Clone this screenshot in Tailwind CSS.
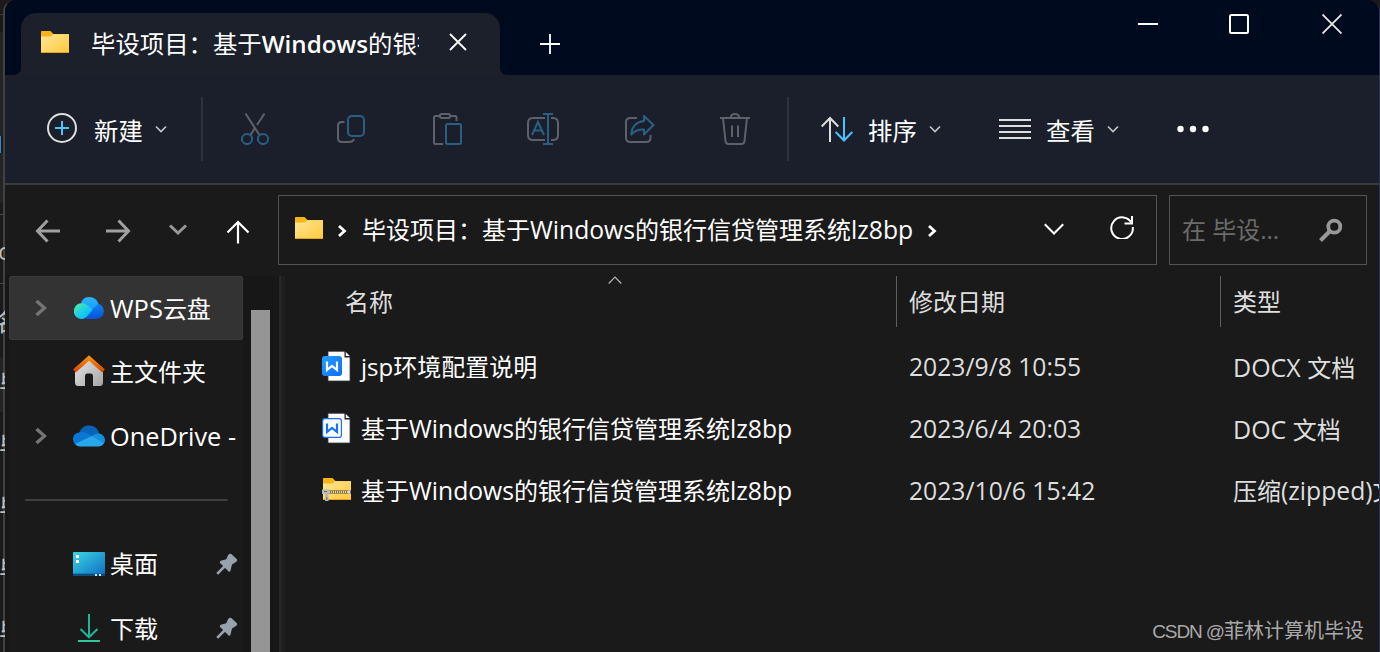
<!DOCTYPE html>
<html lang="zh-CN">
<head>
  <meta charset="UTF-8" />
  <meta name="viewport" content="width=device-width, initial-scale=1.0"/>
  <title>毕设项目</title>
  <script src="https://cdn.jsdelivr.net/npm/@tailwindcss/browser@4"></script>
</head>
<body class="flex h-[652px] w-[1380px] overflow-hidden bg-[#1a1a1a] font-['Open_Sans','Noto_Sans_CJK_SC',sans-serif] text-[24px] leading-8 whitespace-nowrap text-white">

  <!-- Shared shapes -->
  <svg width="0" height="0" class="absolute">
    <defs>
      <linearGradient id="gFolder" x1="0" y1="0" x2="1" y2="1"><stop offset="0" stop-color="#ffe69a"/><stop offset="1" stop-color="#ffc938"/></linearGradient>
      <linearGradient id="gDesk" x1="0" y1="0" x2="1" y2="1"><stop offset="0" stop-color="#3bd5e8"/><stop offset="1" stop-color="#0f6cbd"/></linearGradient>
      <linearGradient id="gRoof" x1="0" y1="0" x2="0" y2="1"><stop offset="0" stop-color="#f78b0c"/><stop offset="1" stop-color="#d94a05"/></linearGradient>
      <linearGradient id="gHouse" x1="0" y1="0" x2="1" y2="1"><stop offset="0" stop-color="#e8e8e8"/><stop offset="1" stop-color="#a5a5a5"/></linearGradient>
      <linearGradient id="gCloudA" x1="0" y1="0" x2="1" y2="1"><stop offset="0" stop-color="#57efa0"/><stop offset=".6" stop-color="#14c8f5"/><stop offset="1" stop-color="#12aaff"/></linearGradient>
      <linearGradient id="gCloudB" x1="0" y1="0" x2="0" y2="1"><stop offset="0" stop-color="#2cb5fb"/><stop offset="1" stop-color="#1599f8"/></linearGradient>
      <linearGradient id="gCloudC" x1="0" y1="0" x2="0" y2="1"><stop offset="0" stop-color="#0a84f5"/><stop offset="1" stop-color="#0b52d8"/></linearGradient>
      <linearGradient id="gDoc" x1="0" y1="0" x2="1" y2="1"><stop offset="0" stop-color="#27a0ff"/><stop offset="1" stop-color="#0c6cfb"/></linearGradient>
      <symbol id="folder" viewBox="0 0 28 22">
        <path d="M0 0.8Q0 0 .8 0H9.5L12.5 3H28V8H0Z" fill="#fbb416"/>
        <path d="M0 5.5H9.5L12 3.2H28V22H0Z" fill="url(#gFolder)"/>
        <path d="M0 21.5H28" stroke="#e9a31b"/>
      </symbol>
      <symbol id="chev" viewBox="0 0 12 8"><path d="M1 1.5L6 6.5L11 1.5" fill="none" stroke="#c4c5c9" stroke-width="1.6"/></symbol>
      <symbol id="expand" viewBox="0 0 12 18"><path d="M1.5 2L9.5 9L1.5 16" fill="none" stroke="#747474" stroke-width="3.4"/></symbol>
      <symbol id="crumb" viewBox="0 0 10 14"><path d="M2 2L7.5 7L2 12" fill="none" stroke="#fff" stroke-width="2.8"/></symbol>
      <symbol id="pin" viewBox="0 0 22 22">
        <path d="M12.2 2Q13.6 0 15.3 1L20.9 6.2Q21.8 7.6 20.3 8.8L16 11.6L14.4 18Q13.6 19.4 12.4 18.2L4 10Q3.2 8.5 4.8 7.8L10.2 6.2Z" fill="#99a2aa"/>
        <path d="M8.5 13.5L1.2 20.8" stroke="#99a2aa" stroke-width="2.6"/>
      </symbol>
    </defs>
  </svg>

  <!-- Edge of the window behind -->
  <div class="relative z-10 -mr-[2px] flex h-[652px] w-[5px] shrink-0 flex-col overflow-hidden text-[#bdbdbd]">
    <div class="h-[15px] w-[3px] shrink-0 border-b border-[#3a3a3a]"></div>
    <div class="h-[17px] shrink-0"></div>
    <div class="h-[104px] w-[3px] shrink-0 bg-[#242424]"></div>
    <div class="h-[17px] w-[1px] shrink-0 bg-[#2f8cc4]"></div>
    <div class="h-[50px] w-[3px] shrink-0 bg-[#242424]"></div>
    <div class="h-[12px] w-[3px] shrink-0 border-b border-[#4a4a4a]"></div>
    <div class="h-[69px] w-[5px] shrink-0 border-b border-[#4a4a4a] pt-[20px]"><span class="-ml-[2px]">c</span></div>
    <div class="h-[74px] shrink-0 pt-[22px]"><span class="-ml-[5px]">名</span></div>
    <div class="h-[54px] w-[3px] shrink-0 bg-[#242424] pt-[10px]"><span class="-ml-[1px]">毕</span></div>
    <div class="h-[62px] shrink-0 pt-[18px]"><span class="-ml-[1px]">毕</span></div>
    <div class="h-[62px] shrink-0 pt-[18px]"><span class="-ml-[1px]">毕</span></div>
    <div class="h-[62px] shrink-0 pt-[18px]"><span class="-ml-[1px]">毕</span></div>
    <div class="h-[62px] shrink-0 pt-[18px]"><span class="-ml-[1px]">毕</span></div>
  </div>

  <!-- Explorer window -->
  <div class="flex h-[652px] w-[1377px] shrink-0 flex-col overflow-hidden rounded-t-[12px] border-r border-l-2 border-r-[#2d3350] border-l-[#414141] bg-[#1a1a1a]">

    <!-- Title bar -->
    <div class="flex h-[75px] shrink-0 bg-[#000a1e]">
      <div class="flex w-4 items-end bg-[#1b202b]"><div class="h-[75px] w-4 rounded-br-[7px] bg-[#000a1e]"></div></div>
      <div class="mt-[13px] flex h-[62px] w-[479px] items-center rounded-t-[15px] bg-[#1b202b] pl-5">
        <svg width="28" height="22" class="mb-1"><use href="#folder"/></svg>
        <div class="ml-[22px] w-[328px] overflow-hidden text-[24.4px]">毕设项目：基于<span class="text-[24.2px] font-semibold">Windows</span>的银行信贷</div>
        <svg width="18" height="18" class="mb-[4px] ml-[30px]" fill="none" stroke="#fff" stroke-width="1.8"><path d="M1 1L17 17M17 1L1 17"/></svg>
      </div>
      <div class="flex flex-1 bg-[#1b202b]">
        <div class="flex flex-1 rounded-bl-[7px] bg-[#000a1e]">
          <svg width="20" height="20" class="mt-[34px] ml-10" fill="none" stroke="#fff" stroke-width="1.8"><path d="M10 0V20M0 10H20"/></svg>
          <div class="mt-[14px] ml-auto flex h-5 gap-[71px] pr-[37px]">
            <svg width="20" height="20"><path d="M0 10H20" stroke="#fff" stroke-width="2"/></svg>
            <svg width="20" height="20"><rect x="1" y="1" width="18" height="18" rx="1.5" fill="none" stroke="#fff" stroke-width="2"/></svg>
            <svg width="20" height="20" class="ml-[2px]" stroke="#e8e8e8" stroke-width="1.8"><path d="M.5 .5L19.5 19.5M19.5 .5L.5 19.5"/></svg>
          </div>
        </div>
      </div>
    </div>

    <!-- Command bar -->
    <div class="flex h-[110px] shrink-0 items-center border-b-2 border-[#3a3a3a] bg-[#1b1f2b] pl-[41px]">
      <svg width="32" height="32" fill="none" class="mb-[2px]"><circle cx="16" cy="16" r="14" stroke="#dedede" stroke-width="2"/><path d="M16 9V23M9 16H23" stroke="#4cc2ff" stroke-width="2"/></svg>
      <span class="mt-[3px] ml-4 w-12 text-[24.4px]">新建</span>
      <svg width="12" height="8" class="ml-[13px]"><use href="#chev"/></svg>
      <div class="ml-[34px] h-16 w-[2px] bg-[#2f323e]"></div>

      <div class="ml-9 flex gap-16">
        <svg width="32" height="32" fill="none" stroke-width="2">
          <path d="M6.5 .5L20.5 22M25.5 .5L18 12M15.5 15.5L11.5 22" stroke="#5f616a"/>
          <circle cx="8" cy="26" r="5.1" stroke="#2b5f82"/><circle cx="24" cy="26" r="5.1" stroke="#2b5f82"/>
        </svg>
        <svg width="32" height="32" fill="none" stroke-width="2">
          <path d="M9.5 9H7Q3 9 3 13V25Q3 29 7 29H14Q18 29 19 26" stroke="#5f616a"/>
          <rect x="13" y="3" width="16" height="20" rx="4" stroke="#2b5f82"/>
        </svg>
        <svg width="32" height="32" fill="none" stroke-width="2">
          <path d="M8.5 3H4.5Q3 3 3 4.5V29.5Q3 31 4.5 31H12M19 3H24Q25.5 3 25.5 4.5V8" stroke="#5f616a"/>
          <rect x="8.8" y="1" width="10.4" height="4" rx="2" stroke="#5f616a"/>
          <rect x="15" y="11" width="15" height="20" rx="1.5" stroke="#2b5f82"/>
        </svg>
        <svg width="32" height="32" fill="none" stroke-width="2">
          <path d="M18 5H6Q1 5 1 10V22Q1 27 6 27H18M24 5H26Q31 5 31 10V22Q31 27 26 27H24" stroke="#5f616a"/>
          <path d="M21 1V31M16 1H26M16 31H26M5 22L11 9L17 22M7.3 17.5H14.8" stroke="#2b5f82"/>
        </svg>
        <svg width="32" height="32" fill="none" stroke-width="2" stroke-linejoin="round">
          <path d="M14 5H7.5Q3 5 3 9V25Q3 29 7.5 29H23Q27.5 29 27.5 25V22" stroke="#5f616a"/>
          <path d="M21 3L30.5 12L21 21.5V16.5Q13 16 8.3 21.5Q9 9.5 21 8Z" stroke="#2b5f82"/>
        </svg>
        <svg width="32" height="32" fill="none" stroke="#5f616a" stroke-width="2">
          <path d="M1 5H31M4 5L6.5 28Q6.8 31 9.5 31H22.5Q25.2 31 25.5 28L28 5M11.5 5Q12 1 16 1Q20 1 20.5 5M13 12.5V24M19 12.5V24"/>
        </svg>
      </div>

      <div class="ml-9 h-16 w-[2px] bg-[#2f323e]"></div>
      <svg width="32" height="32" class="ml-8" fill="none" stroke-width="2"><path d="M9 29V5M.7 13.5L9 5L17.3 13.5" stroke="#dedede"/><path d="M23 4V27.5M14.7 19L23 27.5L31.3 19" stroke="#4cc2ff"/></svg>
      <span class="mt-[3px] mr-px ml-[15px] w-12 text-[24.4px]">排序</span>
      <svg width="12" height="8" class="ml-3"><use href="#chev"/></svg>
      <svg width="32" height="32" class="ml-[58px]"><path d="M0 7H32M0 13H32M0 19H32M0 25H32" stroke="#dedede" stroke-width="2"/></svg>
      <span class="mt-[3px] mr-px ml-[15px] w-12 text-[24.4px]">查看</span>
      <svg width="12" height="8" class="ml-3"><use href="#chev"/></svg>
      <svg width="32" height="32" class="ml-[58px]" fill="#fff"><circle cx="3.5" cy="16" r="3.2"/><circle cx="16" cy="16" r="3.2"/><circle cx="28.5" cy="16" r="3.2"/></svg>
    </div>

    <!-- Navigation row -->
    <div class="flex h-[91px] shrink-0 pt-[10px]">
      <div class="flex h-[72px] w-[273px] items-center pl-[30px]">
        <svg width="26" height="24" fill="none" stroke="#a0a0a0" stroke-width="3"><path d="M25 12H2.5M12.5 1.5L2.5 12L12.5 22.5"/></svg>
        <svg width="26" height="24" class="ml-[44px]" fill="none" stroke="#a0a0a0" stroke-width="3"><path d="M1 12H23.5M13.5 1.5L23.5 12L13.5 22.5"/></svg>
        <svg width="18" height="12" class="mb-[2px] ml-[38px]" fill="none" stroke="#989898" stroke-width="3"><path d="M1 1.5L9 9L17 1.5"/></svg>
        <svg width="24" height="24" class="mt-[2px] ml-[39px]" fill="none" stroke="#fff" stroke-width="2.2"><path d="M12 23.5V2M1.5 12.5L12 2L22.5 12.5"/></svg>
      </div>
      <div class="flex h-[70px] w-[879px] items-center border border-[#535353] pl-4">
        <svg width="28" height="22" class="mb-1"><use href="#folder"/></svg>
        <svg width="10" height="14" class="mt-[2px] ml-[14px]"><use href="#crumb"/></svg>
        <span class="ml-[15px] w-[551px]">毕设项目：基于<span class="text-[24.7px]">Windows</span>的银行信贷管理系统<span class="text-[24.7px]">lz8bp</span></span>
        <svg width="10" height="14" class="mt-[2px] ml-[14px]"><use href="#crumb"/></svg>
        <svg width="20" height="12" class="mb-[2px] ml-[107px]" fill="none" stroke="#fff" stroke-width="2"><path d="M.8 1.2L10 10.5L19.2 1.2"/></svg>
        <svg width="24" height="24" class="mb-[6px] ml-[46px]" fill="none" stroke="#fff" stroke-width="2"><path d="M21.8 8.5A10.8 10.8 0 1 0 22.8 12M22 1V8.5H14.5"/></svg>
      </div>
      <div class="ml-3 flex h-[70px] w-[198px] items-center border border-[#535353] pl-3 text-[#6b6b6b]">
        <span class="w-[97px]">在 毕设...</span>
        <svg width="24" height="24" class="ml-[40px]" fill="none" stroke="#989898"><circle cx="15.3" cy="8.7" r="6" stroke-width="3.8"/><path d="M11 13L1.5 22.5" stroke-width="4"/></svg>
      </div>
    </div>

    <div class="flex min-h-0 flex-1">
      <!-- Sidebar -->
      <div class="flex w-[238px] shrink-0 flex-col overflow-hidden border-l-4 border-[#171717]">
        <div class="flex h-16 shrink-0 items-center rounded-[2px] border border-[#3a3a3a] bg-[#333] pl-[25px]">
          <svg width="12" height="18"><use href="#expand"/></svg>
          <svg width="30" height="22" class="ml-[27px]">
            <path d="M12 22L16 14L24 6.5A7.9 7.9 0 0 1 22.5 22Z" fill="url(#gCloudC)"/>
            <path d="M6.5 9C7 3 10.5 0 15 0C20 0 23.5 3 24.3 6.8L17 14L12 12Z" fill="url(#gCloudB)"/>
            <path d="M8 22A7.9 7.9 0 1 1 12.5 7.8Q16 9.5 18.5 13L12.5 20Q10.5 22 8 22Z" fill="url(#gCloudA)"/>
          </svg>
          <span class="ml-[6px]"><span class="text-[25.5px]">WPS</span>云盘</span>
        </div>
        <div class="flex h-16 shrink-0 items-center pl-16">
          <svg width="32" height="32" class="mb-[2px]">
            <path d="M2 13L16 2L30 13V27Q30 31 27 31H20V21Q20 18.5 18 18.5H14Q12 18.5 12 21V31H5Q2 31 2 27Z" fill="url(#gHouse)"/>
            <path d="M1.5 16L16 3L30.5 16" fill="none" stroke="url(#gRoof)" stroke-width="4"/>
          </svg>
          <span class="ml-[5px]">主文件夹</span>
        </div>
        <div class="flex h-16 shrink-0 items-center pl-[26px]">
          <svg width="12" height="18"><use href="#expand"/></svg>
          <svg width="32" height="22" class="ml-[26px]">
            <path d="M6 8C8 3 11 .5 16 .5C21 .5 25 3.5 26 8L19 14Z" fill="#0763b8"/>
            <path d="M6.5 7.5C10 6 14 7.5 19 11L12 18L2 19.5C-2 14 0 8 6.5 7.5Z" fill="#0a78d3"/>
            <path d="M19 11Q26 5.5 30.5 11Q33.5 15 30.5 19L20 15Z" fill="#1490df"/>
            <path d="M2 19L19 11L30.8 18.5Q29 21.5 25 21.5H7Q4 21.5 2 19Z" fill="#28a8ea"/>
          </svg>
          <span class="ml-[5px] text-[25.3px]">OneDrive -</span>
        </div>
        <div class="mt-[31px] mb-[31px] ml-4 h-[2px] w-[203px] shrink-0 rounded-full bg-[#3f3f3f]"></div>
        <div class="flex h-16 shrink-0 items-center pl-16">
          <svg width="32" height="24">
            <rect width="32" height="24" rx="1" fill="url(#gDesk)"/><path d="M0 22.8H32" stroke="#0b4a75" stroke-width="2.2"/>
            <path d="M3 3H6V6H3ZM3 8H6V11H3Z" fill="#fff"/><path d="M22 22H24V24H22ZM26 22H28V24H26Z" fill="#cfe6f3"/>
          </svg>
          <span class="ml-[5px] w-12">桌面</span>
          <svg width="22" height="22" class="ml-[58px]"><use href="#pin"/></svg>
        </div>
        <div class="flex h-16 shrink-0 items-center pl-16">
          <svg width="32" height="30" fill="none" stroke-width="2">
            <path d="M16 1V24M7.5 16L16 24.3L24.5 16" stroke="#1fb597"/><path d="M5 28H27" stroke="#35c79a"/>
          </svg>
          <span class="mt-[2px] ml-[5px] w-12">下载</span>
          <svg width="22" height="22" class="ml-[58px]"><use href="#pin"/></svg>
        </div>
      </div>
      <!-- Scrollbar and splitter -->
      <div class="w-[36px] shrink-0 bg-[#171717] pt-[34px] pl-2"><div class="h-full w-[19px] bg-[#959595]"></div></div>
      <div class="w-[6px] shrink-0 border-l-2 border-[#282828] bg-[#1f1f1f]"></div>

      <!-- File list -->
      <div class="min-w-0 flex-1 overflow-hidden">
        <div class="relative grid h-[51px] grid-cols-[612px_324px_1fr] items-center text-[#dedede]">
          <div class="flex h-full items-center border-r border-[#5e5e5e] pt-[1px] pl-[60px]">名称</div>
          <div class="flex h-full items-center border-r border-[#5e5e5e] pt-[1px] pl-[12px]">修改日期</div>
          <div class="pt-[1px] pl-[12px]">类型</div>
          <svg width="14" height="8" class="absolute top-0 left-[323px]" fill="none" stroke="#b5b5b5" stroke-width="1.2"><path d="M.7 7.5L7 1.2L13.3 7.5"/></svg>
        </div>
        <div class="mt-[9px] grid grid-cols-[37px_587px_324px_1fr] text-[#dedede]">
          <div class="col-span-4 grid h-[62px] grid-cols-subgrid items-center">
            <svg width="30" height="32" class="ml-[37px] overflow-visible" viewBox="0 0 30 32">
              <path d="M6 .3H22L28 6.5V30H6Z" fill="#fdfdff" stroke="#343a45" stroke-width=".8"/><path d="M22.5 .5V6.5H28Z" fill="#20242c"/><path d="M23.8 1L27.8 5H23.8Z" fill="#fff"/>
              <rect x="0" y="5" width="20" height="20" rx="3" fill="url(#gDoc)"/><path d="M5 10.5V19L10 15L15 19V10.5" fill="none" stroke="#fff" stroke-width="2.2"/>
            </svg>
            <div class="pl-[39px] text-white"><span class="text-[24px]">jsp</span>环境配置说明</div>
            <div class="text-[24.7px]">2023/9/8 10:55</div>
            <div><span class="text-[25px]">DOCX </span>文档</div>
          </div>
          <div class="col-span-4 grid h-[62px] grid-cols-subgrid items-center">
            <svg width="30" height="32" class="ml-[37px] overflow-visible" viewBox="0 0 30 32">
              <path d="M6 .3H22L28 6.5V30H6Z" fill="#fdfdff" stroke="#343a45" stroke-width=".8"/><path d="M22.5 .5V6.5H28Z" fill="#20242c"/><path d="M23.8 1L27.8 5H23.8Z" fill="#fff"/>
              <rect x=".6" y="5.6" width="18.8" height="18.8" rx="2.5" fill="#fff" stroke="#1670fa" stroke-width="1.2"/><path d="M5 10.5V19L10 15L15 19V10.5" fill="none" stroke="#1670fa" stroke-width="2.2"/>
            </svg>
            <div class="pl-[39px] text-white">基于<span class="text-[24.7px]">Windows</span>的银行信贷管理系统<span class="text-[24.7px]">lz8bp</span></div>
            <div class="text-[24.7px]">2023/6/4 20:03</div>
            <div><span class="text-[25px]">DOC </span>文档</div>
          </div>
          <div class="col-span-4 grid h-[62px] grid-cols-subgrid items-center">
            <svg width="30" height="24" class="mb-[2px] ml-[37px] overflow-visible">
              <svg x="1" y="0" width="28" height="22"><use href="#folder"/></svg>
              <path d="M5 14H29" stroke="#7f7046" stroke-width="3.4"/><path d="M7 14H26" stroke="#fff3cc" stroke-width="1.6" stroke-dasharray="1 1"/><path d="M26 12.5H28V15.5H26Z" fill="#ddd"/>
              <path d="M0 11.5H7V16H6.5V23H3V16H0Z" fill="#b9b9b5"/><path d="M2 13.5H5M4.8 19V22" stroke="#6d6d6a"/>
            </svg>
            <div class="pl-[39px] text-white">基于<span class="text-[24.7px]">Windows</span>的银行信贷管理系统<span class="text-[24.7px]">lz8bp</span></div>
            <div class="text-[24.7px]">2023/10/6 15:42</div>
            <div>压缩<span class="text-[24.7px]">(zipped)</span>文件夹</div>
          </div>
        </div>
      </div>
    </div>
  </div>

  <!-- Watermark over the list -->
  <div class="absolute right-4 bottom-[6px] font-['Liberation_Sans','Noto_Sans_CJK_SC',sans-serif] text-[20px] leading-7 text-[#a9a9a9]"><span class="text-[19px] tracking-[-1.1px]">CSDN @</span>菲林计算机毕设</div>
</body>
</html>
